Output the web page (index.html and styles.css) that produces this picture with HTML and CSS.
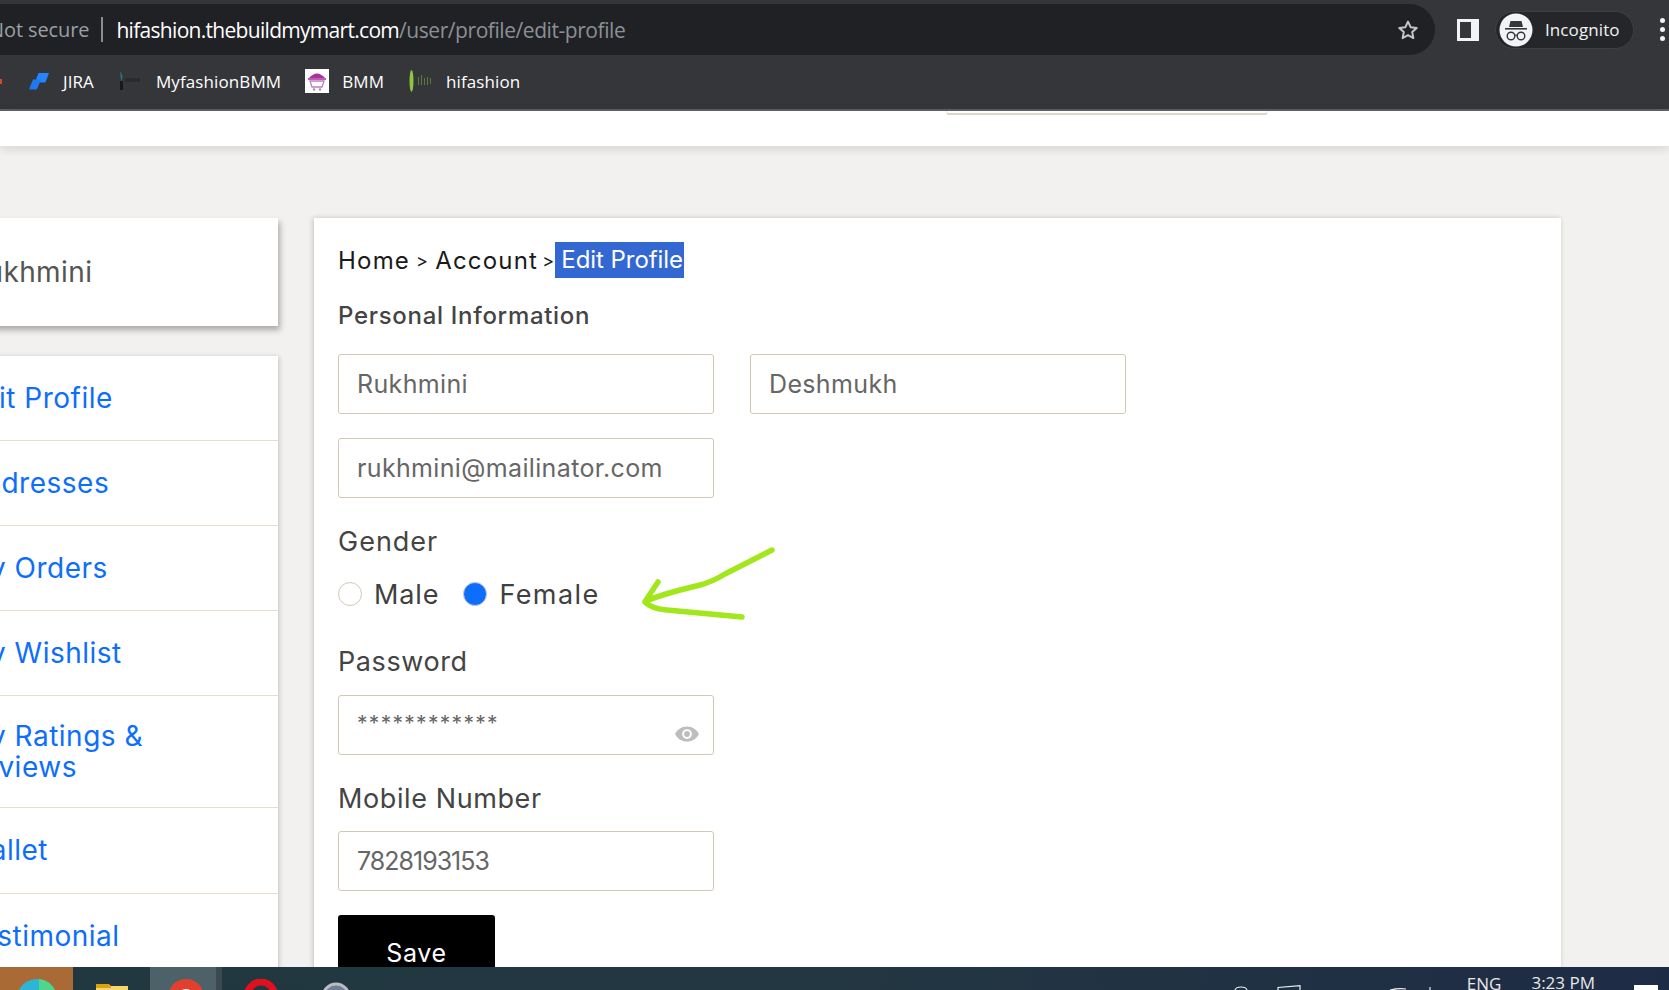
FILE: index.html
```html
<!DOCTYPE html>
<html lang="en">
<head>
  <meta charset="UTF-8" />
  <meta name="viewport" content="width=device-width, initial-scale=1.0"/>
  <title>Edit Profile</title>
  <link rel="stylesheet" href="styles.css">
</head>
<body>

  <div class="browser">
    <div class="toolbar">
      <div class="omnibox">
        <span class="secure">Not secure</span>
        <span class="url"><b>hifashion.thebuildmymart.com</b>/user/profile/edit-profile</span>
        <svg class="star" viewBox="0 0 24 24" width="24" height="24"><path d="M12 3.600l2.600 5.600 6.100.7-4.500 4.200 1.200 6L12 17.100l-5.400 3 1.200-6-4.500-4.200 6.100-.7z" fill="none" stroke="#c4c7c5" stroke-width="2" stroke-linejoin="round"/></svg>
      </div>
      <svg class="panel" viewBox="0 0 22 22" width="22" height="22"><path d="M0 0h22v22H0z" fill="#f1f3f4"/><path d="M3 3h11v16H3z" fill="#35363a"/></svg>
      <div class="profile">
        <svg viewBox="0 0 34 34" width="34" height="34">
          <circle cx="17" cy="17" r="16.500" fill="#f1f3f4"/>
          <path d="M11.500 8h11l1.500 6H10z" fill="#35363a"/>
          <path d="M6 15h22v1.600H6z" fill="#35363a"/>
          <circle cx="12" cy="23" r="3.800" fill="none" stroke="#35363a" stroke-width="1.400"/>
          <circle cx="22" cy="23" r="3.800" fill="none" stroke="#35363a" stroke-width="1.400"/>
          <path d="M15.500 22.500q1.500-1 3 0" fill="none" stroke="#35363a" stroke-width="1.200"/>
        </svg>
        <span>Incognito</span>
      </div>
      <div class="kebab"><i></i><i></i><i></i></div>
    </div>
    <div class="bookmarks">
      <span class="bm-edge"></span>
      <span class="bm">
        <svg viewBox="0 0 21 18" width="21" height="18"><path d="M9.500 1H20l-3 8c-.4 1-1 1.500-2 1.500H6z" fill="#2684ff"/><path d="M4 7.500h8L8.500 16c-.4 1-1 1.500-2 1.500H1.500C.6 17.500.2 17 .5 16z" fill="#1f78f0"/></svg>
        JIRA
      </span>
      <span class="bm">
        <svg viewBox="0 0 25 24" width="25" height="24"><path d="M2 2l2.500 5-1 5 1 10L2 15l1-4z" fill="#1f7f86"/><path d="M2 12h3v9H2z" fill="#17181b"/><path d="M7 9h15v4H7z" fill="#2b2c30"/></svg>
        MyfashionBMM
      </span>
      <span class="bm">
        <svg viewBox="0 0 24 24" width="24" height="24"><path d="M0 0h24v24H0z" fill="#fff"/><path d="M4 9q8-9 16 0z" fill="#a9329b"/><path d="M3 9h18v2H3z" fill="#c25bb3"/><path d="M5 12h14l-2 6H7z" fill="none" stroke="#bb7fc4" stroke-width="1.300"/><circle cx="9" cy="20.500" r="1.200" fill="#bb7fc4"/><circle cx="15" cy="20.500" r="1.200" fill="#bb7fc4"/></svg>
        BMM
      </span>
      <span class="bm">
        <svg viewBox="0 0 25 24" width="25" height="24"><ellipse cx="3.500" cy="12" rx="2" ry="11" fill="#8dc63f"/><path d="M10 8h1v8h-1zM13 6h1v10h-1zM16 9h1v7h-1zM19 8h1v8h-1zM22 9h1v6h-1z" fill="#5d7a34"/></svg>
        hifashion
      </span>
    </div>
  </div>

  <header class="site-header"><div class="search-edge"></div></header>

  <main class="page">
    <aside class="sidebar">
      <div class="hello">Rukhmini</div>
      <nav class="side-nav">
        <a href="#">Edit Profile</a>
        <a href="#">Addresses</a>
        <a href="#">My Orders</a>
        <a href="#">My Wishlist</a>
        <a href="#" class="tall">My Ratings &amp; Reviews</a>
        <a href="#" class="wallet">Wallet</a>
        <a href="#">Testimonial</a>
      </nav>
    </aside>

    <section class="content">
      <div class="crumbs">
        <span>Home</span><i>&gt;</i><span>Account</span><i>&gt;</i><span class="current">Edit Profile</span>
      </div>
      <h2>Personal Information</h2>

      <div class="row">
        <div class="field">Rukhmini</div>
        <div class="field">Deshmukh</div>
      </div>
      <div class="row">
        <div class="field">rukhmini@mailinator.com</div>
      </div>

      <div class="label gender-label">Gender</div>
      <div class="gender">
        <span class="radio"></span><span>Male</span>
        <span class="radio on"></span><span class="female">Female</span>
        <svg class="arrow" viewBox="0 0 140 80" width="140" height="80"><path d="M132 5L85 29Q72 37 60 40Q40 45 33 47Q15 52 5 56.500Q12 46 18 37M5 57Q12 64 27 65L102 72" fill="none" stroke="#a2e61c" stroke-width="5.500" stroke-linecap="round" stroke-linejoin="round"/></svg>
      </div>

      <div class="label">Password</div>
      <div class="field pass">
        <span>************</span>
        <svg viewBox="0 0 24 24" width="26" height="26"><path d="M12 5C7 5 2.700 8 1 12c1.700 4 6 7 11 7s9.300-3 11-7c-1.700-4-6-7-11-7zm0 11.500a4.500 4.500 0 1 1 0-9 4.500 4.500 0 0 1 0 9zm0-7.200a2.700 2.700 0 1 0 0 5.400 2.700 2.700 0 0 0 0-5.400z" fill="#bdbdbd"/></svg>
      </div>

      <div class="label mobile-label">Mobile Number</div>
      <div class="field digits">7828193153</div>

      <button class="save">Save</button>
    </section>
  </main>

  <footer class="taskbar">
    <div class="task start"><svg viewBox="0 0 40 40" width="40" height="40"><circle cx="20" cy="20" r="20" fill="#2bb6d8"/><path d="M22 0a20 20 0 0 1 18 20H22z" fill="#4fd68b"/></svg></div>
    <div class="task files"><svg viewBox="0 0 32 24" width="32" height="24"><path d="M0 4h15V2h17v22H0z" fill="#f6d66f"/><path d="M0 0h13l2 2v2H0z" fill="#dba40f"/></svg></div>
    <div class="task active"><svg viewBox="0 0 36 36" width="36" height="36"><circle cx="18" cy="18" r="18" fill="#e2402f"/><path d="M18 18L36 13A18 18 0 0 1 30 32z" fill="#f4c430"/><path d="M18 18L0 14A18 18 0 0 0 8 33z" fill="#34a853"/><circle cx="18" cy="18" r="8" fill="#fff"/></svg></div>
    <div class="task opera"><svg viewBox="0 0 36 36" width="36" height="36"><ellipse cx="18" cy="18" rx="14" ry="15" fill="none" stroke="#e01020" stroke-width="7"/></svg></div>
    <div class="task globe"><svg viewBox="0 0 30 30" width="30" height="30"><circle cx="15" cy="15" r="13" fill="#6f7f96" stroke="#b9bec6" stroke-width="3"/></svg></div>
    <div class="tray">
      <svg class="t-arc" viewBox="0 0 14 4" width="14" height="4"><path d="M1 4Q2 1 7 1T13 4" fill="none" stroke="#eee" stroke-width="1.200"/></svg>
      <svg class="t-net" viewBox="0 0 24 5" width="24" height="5"><path d="M1 5V2.500L23 .7V5" fill="none" stroke="#eee" stroke-width="1.200"/></svg>
      <svg class="t-vol" viewBox="0 0 18 2" width="18" height="2"><path d="M1 2Q9 0 17 1" fill="none" stroke="#eee" stroke-width="1.200"/></svg>
      <svg class="t-tick" viewBox="0 0 6 3" width="6" height="3"><path d="M3 0v3" stroke="#eee" stroke-width="1.200"/></svg>
      <span class="lang">ENG</span>
      <span class="clock">3:23 PM</span>
      <span class="notify"></span>
    </div>
  </footer>

</body>
</html>
```

FILE: styles.css
```css
* {
  box-sizing: border-box;
}

html, body {
  height: 100%;
}

body {
  margin: 0;
  height: 990px;
  overflow: hidden;
  display: flex;
  flex-direction: column;
  font-family: 'Inter', 'Liberation Sans', sans-serif;
  background: #f2f1ef;
  color: #404040;
}

/* browser chrome */
.browser {
  flex: none;
  height: 111px;
  background: #35363a;
  border-bottom: 2px solid #5f6064;
  font-family: 'Open Sans', 'Noto Sans', sans-serif;
}

.toolbar {
  height: 55px;
  padding-top: 4px;
  display: flex;
  align-items: center;
}

.omnibox {
  width: 1435px;
  height: 51px;
  background: #202124;
  border-radius: 0 26px 26px 0;
  display: flex;
  align-items: center;
  font-size: 21px;
  color: #9aa0a6;
  padding-right: 15px;
}

.secure {
  margin-left: -11px;
  padding-right: 12px;
  margin-right: 13px;
  border-right: 2px solid #8a8d91;
  line-height: 25px;
  font-size: 20px;
  letter-spacing: -0.1px;
}

.url {
  flex: 1;
  font-size: 21px;
  letter-spacing: -0.44px;
  color: #8c9096;
}

.url b {
  font-weight: 400;
  letter-spacing: -0.7px;
  color: #fff;
}

.panel {
  margin-left: 22px;
  flex: none;
}

.profile {
  margin-left: 16px;
  width: 139px;
  height: 38px;
  flex: none;
  border-radius: 19px;
  background: #25262a;
  border: 1px solid #3e3f43;
  display: flex;
  align-items: center;
  padding-left: 3px;
  color: #f1f3f4;
  font-size: 17px;
}

.profile span {
  margin-left: 12px;
  letter-spacing: 0.1px;
}

.kebab {
  margin-left: 26px;
  display: flex;
  flex-direction: column;
  gap: 4px;
}

.kebab i {
  display: block;
  width: 5px;
  height: 5px;
  border-radius: 50%;
  background: #f1f3f4;
}

.bookmarks {
  height: 54px;
  padding-bottom: 2px;
  display: flex;
  align-items: center;
  color: #fff;
  font-size: 17px;
  letter-spacing: 0.1px;
}

.bm-edge {
  width: 2px;
  height: 5px;
  margin-right: 27px;
  background: #d8452e;
}

.bm {
  display: flex;
  align-items: center;
  gap: 13px;
  margin-right: 24px;
}

.bm:first-of-type svg {
  margin-right: 2px;
}

/* site */
.site-header {
  flex: none;
  height: 35px;
  background: #fff;
  box-shadow: 0 3px 10px rgba(0, 0, 0, 0.12);
  position: relative;
}

.search-edge {
  width: 322px;
  height: 4px;
  margin-left: 946px;
  border: 1px solid #eeebe3;
  border-top: 0;
  border-bottom: 2px solid #dcd7c8;
  border-radius: 0 0 3px 3px;
}

.page {
  flex: 1;
  min-height: 0;
  padding-top: 72px;
  display: flex;
  gap: 36px;
  overflow: hidden;
}

.sidebar {
  flex: none;
  width: 340px;
  margin-left: -62px;
}

.hello {
  height: 108px;
  background: #fff;
  box-shadow: 2px 4px 6px rgba(0, 0, 0, 0.3);
  padding-left: 30px;
  display: flex;
  align-items: center;
  font-size: 28px;
  letter-spacing: 0.4px;
  color: #555;
  margin-bottom: 30px;
}

.side-nav {
  background: #fff;
  box-shadow: 1px 1px 5px rgba(0, 0, 0, 0.2);
}

.side-nav a {
  display: flex;
  align-items: center;
  height: 85px;
  padding-left: 26px;
  border-bottom: 1px solid #e6ddd0;
  color: #0d6efd;
  text-decoration: none;
  font-size: 28px;
  line-height: 31px;
  letter-spacing: 0.5px;
}

.side-nav a.tall {
  height: 112px;
  padding-right: 130px;
}

.side-nav a.wallet {
  height: 86px;
}

.content {
  flex: none;
  width: 1247px;
  background: #fff;
  box-shadow: -1px 0 5px rgba(0, 0, 0, 0.2);
  padding: 24px 24px 0;
}

.crumbs {
  display: flex;
  align-items: center;
  height: 36px;
  font-size: 24px;
  letter-spacing: 1.2px;
  color: #1a1a1a;
}

.crumbs i {
  font-style: normal;
  margin: 0 6px;
  font-size: 18px;
}

.crumbs i:nth-of-type(2) {
  margin: 0 0 0 4px;
}

.crumbs .current {
  background: #3367d1;
  color: #fff;
  padding: 0 1px 0 6px;
  line-height: 36px;
  letter-spacing: -0.05px;
}

h2 {
  margin: 23px 0 23px;
  font-size: 24px;
  font-weight: 500;
  line-height: 30px;
  letter-spacing: 0.7px;
  color: #444;
}

.row {
  display: flex;
  gap: 36px;
  margin-bottom: 24px;
}

.field {
  width: 376px;
  height: 60px;
  flex: none;
  background: #fff;
  border: 1px solid #d2c8b8;
  border-radius: 3px;
  padding-left: 18px;
  display: flex;
  align-items: center;
  font-size: 25px;
  letter-spacing: 0.35px;
  color: #666;
}

.field.digits {
  letter-spacing: -1px;
}

.label {
  font-size: 27px;
  line-height: 36px;
  letter-spacing: 0.6px;
  color: #444;
  margin: 27px 0 15px;
}

.gender-label {
  margin: 0;
  padding-top: 2px;
  letter-spacing: 1px;
}

.mobile-label {
  margin: 26px 0 14px;
}

.gender {
  height: 46px;
  margin-top: 11px;
  display: flex;
  align-items: center;
  gap: 12px;
  font-size: 27px;
  letter-spacing: 0.9px;
  position: relative;
}

.female {
  letter-spacing: 1.4px;
}

.radio {
  width: 24px;
  height: 24px;
  border-radius: 50%;
  border: 1px solid #d2c8b8;
  background: #fff;
}

.radio.on {
  background: #0d6efd;
  border-color: #c8c8c8;
  margin-left: 12px;
}

.arrow {
  position: absolute;
  left: 302px;
  top: -26px;
}

.pass {
  justify-content: space-between;
  padding-right: 13px;
  font-size: 21px;
  letter-spacing: 1.3px;
}

.pass span {
  margin-top: -4px;
}

.pass svg {
  margin-top: 18px;
}

.save {
  display: block;
  width: 157px;
  height: 70px;
  margin-top: 24px;
  background: #000;
  color: #fff;
  border: 0;
  border-radius: 3px 3px 0 0;
  font-family: inherit;
  font-size: 25px;
  letter-spacing: 0.7px;
  padding-top: 6px;
}

/* windows taskbar, cut off by the window */
.taskbar {
  position: fixed;
  left: 0;
  right: 0;
  bottom: 0;
  height: 23px;
  display: flex;
  overflow: hidden;
  background: linear-gradient(to right, #213840, #233742 50%, #1e2b45);
  color: #e8e8e8;
  font-family: 'Open Sans', 'Noto Sans', sans-serif;
}

.task {
  flex: none;
  display: flex;
  justify-content: center;
  padding-top: 12px;
}

.task.start {
  width: 73px;
  background: #a96a35;
}

.task.files {
  width: 77px;
  padding-top: 17px;
}

.task.active {
  width: 72px;
  background: #4d6268;
  border-right: 6px solid #3a4a50;
  padding-left: 6px;
}

.task.opera {
  width: 78px;
}

.task.globe {
  width: 72px;
  padding-top: 15px;
}

.tray {
  margin-left: auto;
  display: flex;
  align-items: flex-start;
  font-size: 17px;
  line-height: 18px;
}

.t-arc {
  margin: 19px 29px 0 0;
}

.t-net {
  margin: 18px 88px 0 0;
}

.t-vol {
  margin: 21px 20px 0 0;
}

.t-tick {
  margin: 20px 34px 0 0;
}

.lang {
  margin-top: 8px;
  margin-right: 30px;
}

.clock {
  margin-top: 7px;
}

.notify {
  width: 24px;
  height: 8px;
  margin: 18px 11px 0 39px;
  background: #fff;
}
```
